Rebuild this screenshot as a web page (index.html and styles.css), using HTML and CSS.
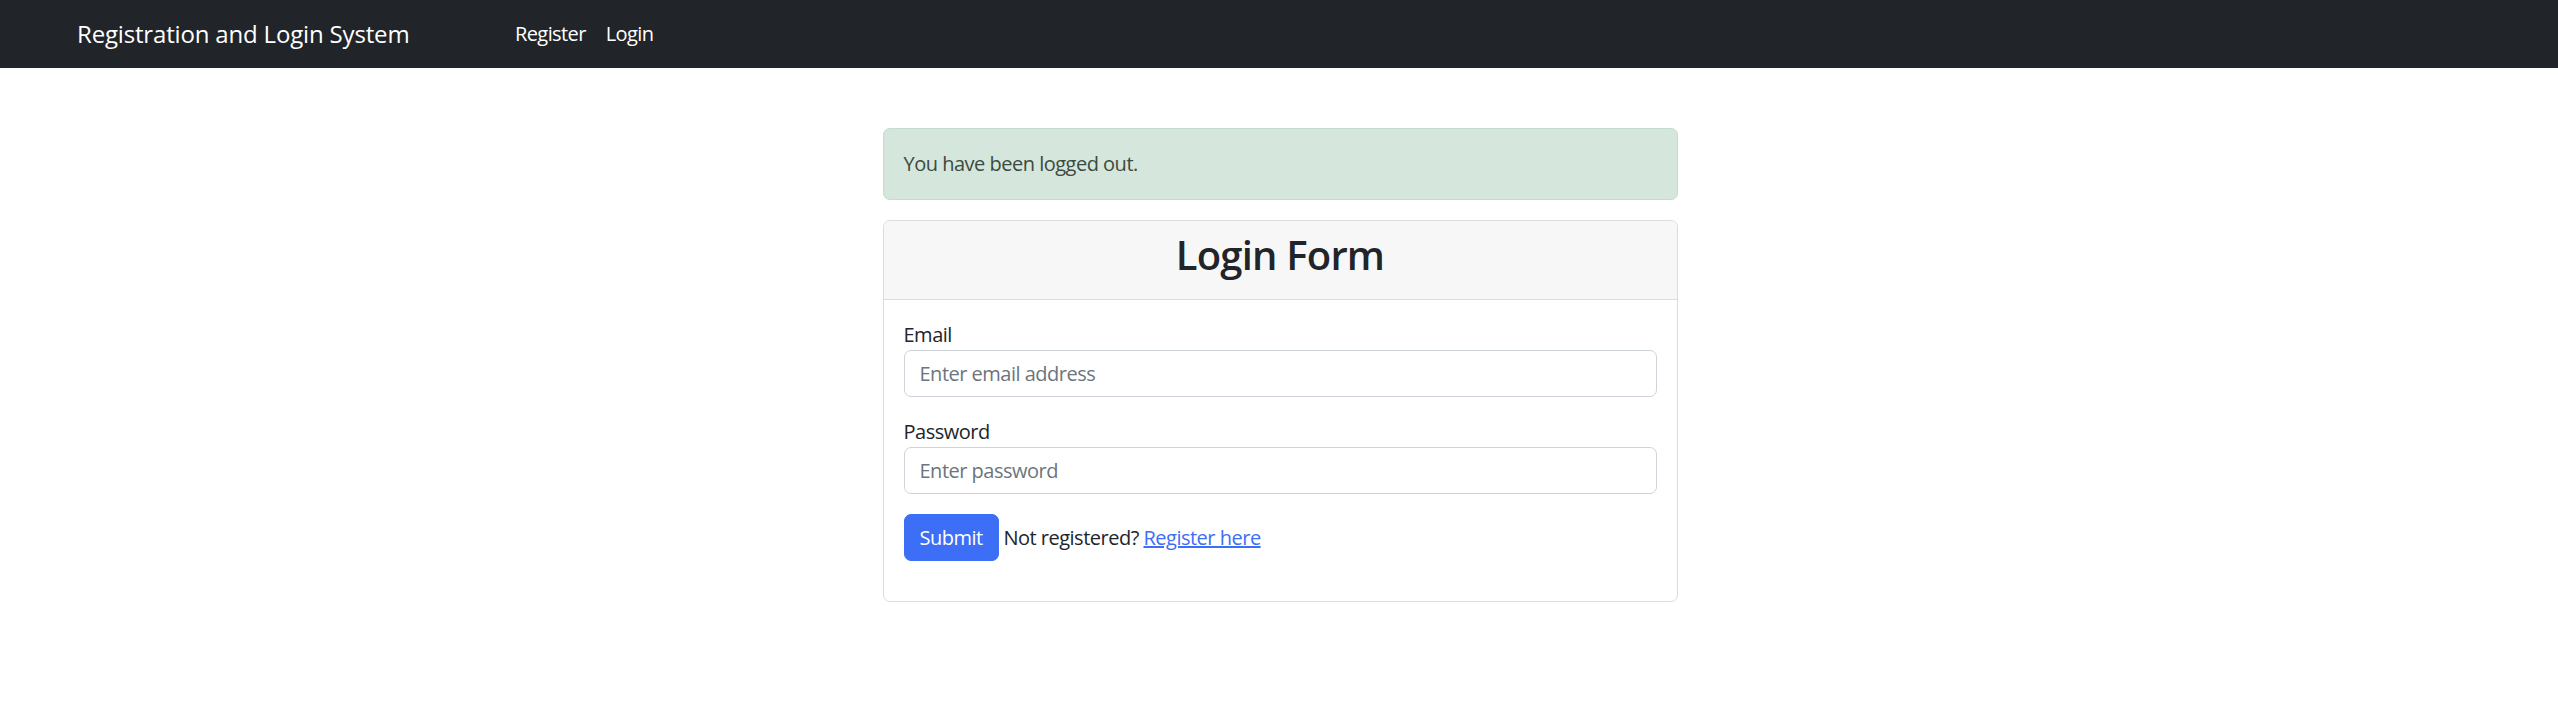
FILE: index.html
```html
<!DOCTYPE html>
<html lang="en">
<head>
<meta charset="utf-8">
<title>Registration and Login System</title>
<link rel="stylesheet" href="styles.css">
</head>
<body>
<nav class="navbar">
  <a class="brand" href="#">Registration and Login System</a>
  <ul class="nav">
    <li><a class="nav-link" href="#">Register</a></li>
    <li><a class="nav-link" href="#">Login</a></li>
  </ul>
</nav>
<main class="main">
  <div class="column">
    <div class="alert">You have been logged out.</div>
    <div class="card">
      <div class="card-header">
        <h2 class="card-title">Login Form</h2>
      </div>
      <div class="card-body">
        <form class="form">
          <div class="field">
            <label class="label" for="email">Email</label>
            <input class="control" id="email" type="email" placeholder="Enter email address">
          </div>
          <div class="field">
            <label class="label" for="password">Password</label>
            <input class="control" id="password" type="password" placeholder="Enter password">
          </div>
          <div class="field actions">
            <button class="btn" type="submit">Submit</button>
            <span class="note">Not registered? <a class="link" href="#">Register here</a></span>
          </div>
        </form>
      </div>
    </div>
  </div>
</main>
</body>
</html>
```
FILE: styles.css
```css
* { box-sizing: border-box; }

html, body {
  margin: 0;
  padding: 0;
  background: #fff;
}

body {
  font-family: "Open Sans", "Noto Sans", "Liberation Sans", sans-serif;
  font-size: 20px;
  line-height: 1.5;
  letter-spacing: -0.5px;
  color: #212529;
}

.navbar {
  display: flex;
  align-items: center;
  height: 68px;
  padding: 0 0 0 77px;
  background: #212529;
}

.brand {
  flex: 0 0 428px;
  font-size: 24px;
  line-height: 1.5;
  letter-spacing: -0.17px;
  color: #fff;
  text-decoration: none;
  white-space: nowrap;
}

.nav {
  display: flex;
  margin: 0;
  padding: 0;
  list-style: none;
}

.nav-link {
  display: block;
  padding: 0 10px;
  font-size: 20px;
  letter-spacing: -0.6px;
  color: #fff;
  text-decoration: none;
}

.main {
  padding-top: 60px;
}

.column {
  width: 795px;
  margin: 0 auto;
  position: relative;
  left: 1px;
}

.alert {
  padding: 20px 20px;
  margin-bottom: 20px;
  background: #d5e6dc;
  border: 1px solid #c4dccf;
  border-radius: 7px;
  color: #3d4a3f;
}

.card {
  border: 1px solid #dcdcdc;
  border-radius: 7px;
  overflow: hidden;
}

.card-header {
  padding: 10px 20px;
  background: #f7f7f7;
  border-bottom: 1px solid #dcdcdc;
}

.card-title {
  margin: 0 0 10px;
  font-size: 40px;
  font-weight: 600;
  line-height: 1.2;
  letter-spacing: -0.8px;
  text-align: center;
  color: #212529;
}

.card-body {
  padding: 20px 20px;
}

.form {
  margin: 0;
}

.field {
  margin-bottom: 20px;
}

.label {
  display: inline-block;
}

.control {
  display: block;
  width: 100%;
  height: 47px;
  padding: 7px 15px;
  font-family: inherit;
  font-size: 20px;
  line-height: 1.5;
  letter-spacing: -0.5px;
  color: #212529;
  background: #fff;
  border: 1px solid #ced4da;
  border-radius: 7px;
}

.control::placeholder {
  color: #6c757d;
}

.btn {
  display: inline-block;
  height: 47px;
  padding: 7px 15px;
  font-family: inherit;
  font-size: 20px;
  line-height: 1.5;
  letter-spacing: -0.5px;
  color: #fff;
  background: #3d6ef6;
  border: 1px solid #3d6ef6;
  border-radius: 7px;
  vertical-align: middle;
}

.note {
  vertical-align: middle;
}

.link {
  color: #3d6ef6;
  text-decoration: underline;
}
```
